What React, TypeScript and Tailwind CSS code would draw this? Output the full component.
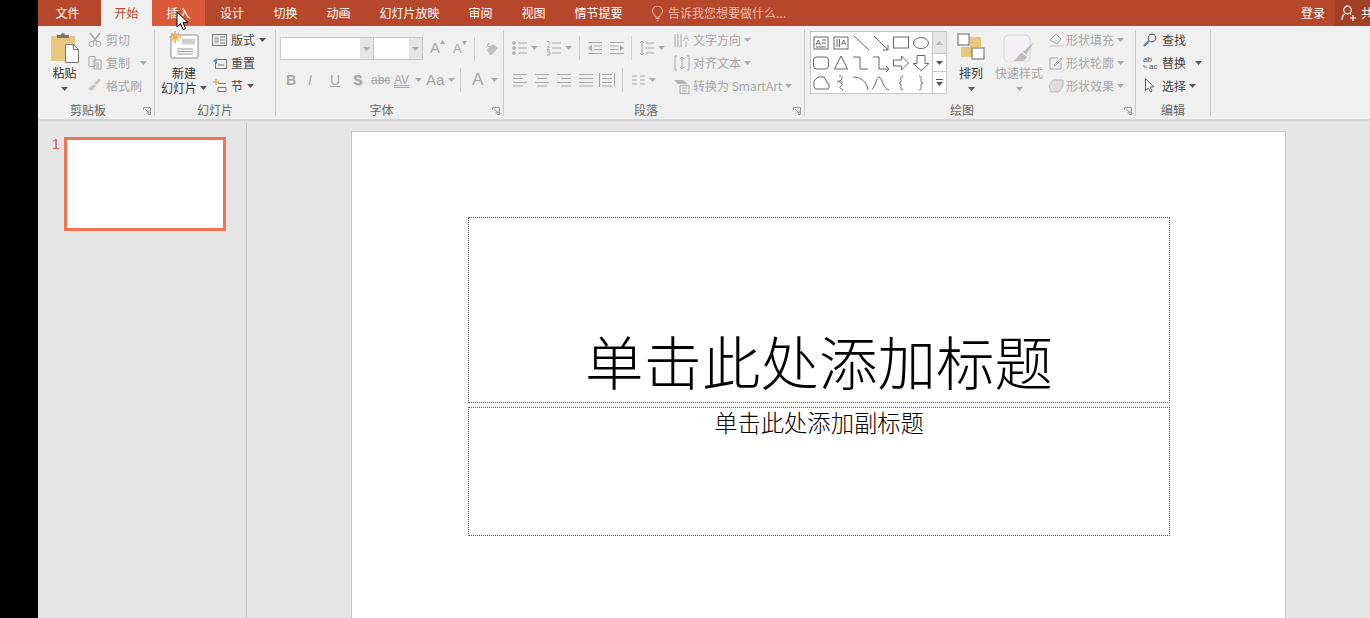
import type { ReactNode } from "react";

const FONT = { fontFamily: '"Noto Sans CJK SC", "Noto Sans", sans-serif' };

const tabs = [
  { label: "设计", w: "w-[54px]" },
  { label: "切换", w: "w-[53px]" },
  { label: "动画", w: "w-[53px]" },
  { label: "幻灯片放映", w: "w-[89px]" },
  { label: "审阅", w: "w-[53px]" },
  { label: "视图", w: "w-[53px]" },
  { label: "情节提要", w: "w-[77px]" },
];

function Caret({ dark = false }: { dark?: boolean }) {
  return (
    <svg width="7" height="4" viewBox="0 0 7 4" className="shrink-0">
      <path d="M0 0h7L3.5 4z" fill={dark ? "#555" : "#aaa"} />
    </svg>
  );
}

function Icon({ w = 16, h = 16, vb, children, className }: { w?: number; h?: number; vb?: string; children: ReactNode; className?: string }) {
  return (
    <svg width={w} height={h} viewBox={vb ?? `0 0 ${w} ${h}`} fill="none" stroke="#a8a8a8" strokeWidth="1" className={`shrink-0 ${className ?? ""}`}>
      {children}
    </svg>
  );
}

function Launcher() {
  return (
    <svg width="8" height="8" viewBox="0 0 8 8" fill="none" stroke="#9a9a9a" strokeWidth="1">
      <path d="M.5 3V.5H7.5V7.5H5" />
      <path d="M2 2l4 4M6 3.5V6H3.5" />
    </svg>
  );
}

function Group({ w, label, launcher, children }: { w: string; label: string; launcher?: boolean; children: ReactNode }) {
  return (
    <div className={`${w} flex h-[86px] shrink-0 flex-col border-r border-[#c9c9c9]`}>
      <div className="-mt-[2px] h-[72px] shrink-0">{children}</div>
      <div className="grid h-[20px] shrink-0 grid-cols-[1fr_auto_1fr] items-center text-[12px] leading-none text-[#666]">
        <span />
        <span className={launcher ? "mr-[16px]" : ""}>{label}</span>
        <span className="justify-self-end pr-[3px] pt-[1px]">{launcher && <Launcher />}</span>
      </div>
    </div>
  );
}

function SmallRow({ icon, label, caret, dark, gap = "gap-[4px]", caretGap = "ml-0" }: { icon: ReactNode; label: string; caret?: boolean; dark?: boolean; gap?: string; caretGap?: string }) {
  return (
    <div className={`flex h-[23px] items-center ${gap} text-[12px] leading-none ${dark ? "text-[#444]" : "text-[#a6a6a6]"}`}>
      {icon}
      <span className="whitespace-nowrap">{label}</span>
      {caret && <span className={`flex ${caretGap}`}><Caret dark={dark} /></span>}
    </div>
  );
}

function Lines({ kind }: { kind: "left" | "center" | "right" | "justify" | "distribute" }) {
  const rows = {
    left: ["M1 2.5h14", "M1 6.5h10", "M1 10.5h14", "M1 14h10"],
    center: ["M1 2.5h14", "M3 6.5h10", "M1 10.5h14", "M3 14h10"],
    right: ["M1 2.5h14", "M5 6.5h10", "M1 10.5h14", "M5 14h10"],
    justify: ["M1 2.5h14", "M1 6.5h14", "M1 10.5h14", "M1 14h14"],
    distribute: ["M.5 1v14", "M15.5 1v14", "M3 2.5h10", "M3 6.5h10", "M3 10.5h10", "M3 14h10"],
  }[kind];
  return <Icon>{rows.map((d) => <path key={d} d={d} />)}</Icon>;
}

const Sep = ({ h = "h-[24px]", ml }: { h?: string; ml: string }) => <span className={`${ml} ${h} w-px shrink-0 bg-[#cfcfcf]`} />;

function PasteIcon() {
  return (
    <svg width="30" height="31" viewBox="0 0 30 31" className="shrink-0">
      <rect x="1" y="4" width="24" height="25" rx="1" fill="#eac77f" />
      <path d="M7 6V3h4a2 2 0 0 1 4 0h4v3z" fill="#777" />
      <path d="M15.5 12.500h8l5 5v13h-13z" fill="#fff" stroke="#777" />
      <path d="M23.500 12.500v5h5" fill="none" stroke="#777" />
    </svg>
  );
}

function NewSlideIcon() {
  return (
    <svg width="32" height="29" viewBox="0 0 32 29" className="shrink-0">
      <rect x="3" y="5" width="27" height="23" rx="1" fill="#fff" stroke="#8a8a8a" />
      <rect x="14" y="8.500" width="13" height="6" fill="#cfcfcf" />
      <path d="M9 19h16M9 21.500h16M9 24h16" stroke="#9a9a9a" />
      <path d="M7 1v12M1 7h12M3 3l8 8M11 3l-8 8" stroke="#eab05a" strokeWidth="1.600" />
    </svg>
  );
}

const S = { stroke: "#666", fill: "none", strokeWidth: 1 };

const shapes: ReactNode[] = [
  <g key="a"><rect x="3" y="4" width="14" height="12" {...S} /><text x="4.500" y="12" fontSize="8" fill="#555" fontFamily="Liberation Sans">A</text><path d="M11 7h4M11 10h4M5 14h10" {...S} /></g>,
  <g key="b"><rect x="3" y="4" width="14" height="12" {...S} /><path d="M6 6v8M8.500 6v8" {...S} /><text x="10" y="12" fontSize="8" fill="#555" fontFamily="Liberation Sans">A</text></g>,
  <path key="c" d="M3 3l15 14" {...S} />,
  <path key="d" d="M3 3l14 14M17 12v5h-5" {...S} />,
  <rect key="e" x="2.500" y="4" width="15" height="11" {...S} />,
  <ellipse key="f" cx="10" cy="10" rx="7.500" ry="5.500" {...S} />,
  <rect key="g" x="2.500" y="4" width="15" height="12" rx="3" {...S} />,
  <path key="h" d="M10 3l6.500 13h-13z" {...S} />,
  <path key="i" d="M2 4h7v12h8" {...S} />,
  <path key="j" d="M2 4h6v12h10M15 13l3 3-3 3" {...S} />,
  <path key="k" d="M2.500 7h8V3l7 7-7 7v-4h-8z" {...S} />,
  <path key="l" d="M6 2.500h8v8h4l-8 7-8-7h4z" {...S} />,
  <path key="m" d="M3 8l4-4h6l3 5v1l2 1v4l-1 1H5l-2-2z" {...S} />,
  <path key="n" d="M8 3c4-1 4 3 1 5s5 2 1 5 4 3 1 5M6 9c3-2 6-1 5 1" {...S} />,
  <path key="o" d="M2 4c8 0 14 5 15 13" {...S} />,
  <path key="p" d="M1 16c4-2 4-12 7-12s4 12 10 13" {...S} />,
  <path key="q" d="M12 3c-3 0-2 3-2 5s-2 2-2 2 2 0 2 2-1 5 2 5" {...S} />,
  <path key="r" d="M8 3c3 0 2 3 2 5s2 2 2 2-2 0-2 2 1 5-2 5" {...S} />,
];

function Body() {
  return (
    <div className="flex min-h-0 flex-1 bg-[#e6e6e6]">
      <div className="mt-[2px] flex h-[495px] w-[209px] shrink-0 gap-[4px] border-r border-[#c6c6c6] pl-[14px] pt-[14px]">
        <span className="-mt-[1px] text-[14px] leading-[16px] text-[#c9593b]" style={{ fontFamily: '"Liberation Sans", sans-serif' }}>1</span>
        <div className="h-[94px] w-[162px] border-[3px] border-[#f37252] bg-white" />
      </div>
      <div className="ml-[104px] mt-[10px] flex h-[600px] w-[935px] shrink-0 flex-col border border-[#c6c6c6] bg-white pt-[85px]">
        <div className="ml-[116px] flex h-[186px] w-[702px] items-end justify-center border border-dotted border-[#555] pb-[3px] text-[58.5px] font-light leading-[78px] text-black">
          单击此处添加标题
        </div>
        <div className="ml-[116px] mt-[4px] flex h-[129px] w-[702px] justify-center border border-dotted border-[#555] text-[23.3px] font-light leading-[29px] text-black">
          单击此处添加副标题
        </div>
      </div>
    </div>
  );
}

export default function App() {
  return (
    <div className="relative flex h-[618px] w-[1370px] overflow-hidden bg-black" style={FONT}>
      <div className="ml-[38px] flex min-w-0 flex-1 flex-col">
        {/* title bar */}
        <div className="flex h-[26px] shrink-0 items-center bg-[#b7472a] text-[12px] leading-none text-white">
          <div className="flex h-full w-[63px] items-center justify-center pr-[4px]">文件</div>
          <div className="flex h-full w-[51px] items-center justify-center bg-[#f0f0f0] text-[#b7472a]">开始</div>
          <div className="flex h-full w-[53px] items-center justify-center bg-[#da5a3a]">插入</div>
          {tabs.map((t) => (
            <div key={t.label} className={`flex h-full ${t.w} items-center justify-center`}>{t.label}</div>
          ))}
          <div className="ml-[14px] flex items-center gap-[4px] text-[#f0bba8]">
            <svg width="13" height="15" viewBox="0 0 13 15" fill="none" stroke="#f0bba8" strokeWidth="1">
              <path d="M4.500 11C4 8.500 1.500 8 1.500 5a5 5 0 0 1 10 0c0 3-2.500 3.500-3 6zM4.500 12.500h4M5.500 14.500h2" />
            </svg>
            <span>告诉我您想要做什么...</span>
          </div>
          <div className="flex-1" />
          <span className="mr-[10px]">登录</span>
          <div className="flex h-full w-[35px] items-center overflow-hidden bg-[#a33f25] pl-[6px]">
            <svg width="15" height="16" viewBox="0 0 15 16" fill="none" stroke="#fff" strokeWidth="1.200" className="shrink-0">
              <circle cx="6.500" cy="5" r="3.800" />
              <path d="M1 15c0-4 2-6 4-6.500M9 8.500l1 1M9 13h6M12 10v6" />
            </svg>
            <span className="ml-[5px] shrink-0 text-[12px]">共享</span>
          </div>
        </div>

        {/* ribbon */}
        <div className="flex h-[95px] shrink-0 items-start border-b-2 border-[#d5d5d5] bg-[#f0f0f0] pt-[4px]">
          <Group w="w-[117px]" label="剪贴板" launcher>
            <div className="flex">
              <div className="flex w-[50px] flex-col items-center pl-[3px] pt-[4px] text-[12px] leading-none text-[#333]">
                <PasteIcon />
                <span className="mt-[4px]">粘贴</span>
                <span className="mt-[8px]"><Caret dark /></span>
              </div>
              <div className="flex flex-col">
                <SmallRow label="剪切" icon={<Icon w={14} h={15}><circle cx="3.500" cy="12" r="2.500" /><circle cx="10.500" cy="12" r="2.500" /><path d="M2 1l7 9M12 1L5 10" strokeWidth="1.500" /></Icon>} />
                <SmallRow label="复制" caret caretGap="ml-[6px]" icon={<Icon w={14} h={15}><path d="M1 1.500h6v10H1zM6 5h7v9H6zM8 8h3M8 10h3M8 12h3" /></Icon>} />
                <SmallRow label="格式刷" icon={<Icon w={14} h={15}><path d="M13 2L8 7 6 5l5-4zM6 6l2 2-4 5-4-2z" fill="#c4c4c4" stroke="none" /></Icon>} />
              </div>
            </div>
          </Group>

          <Group w="w-[121px]" label="幻灯片">
            <div className="flex">
              <div className="flex w-[57px] shrink-0 flex-col items-center pl-[1px] pt-[2px] text-[12px] leading-[15px] text-[#333]">
                <NewSlideIcon />
                <span className="mt-[6px]">新建</span>
                <span className="flex items-center gap-[3px] whitespace-nowrap">幻灯片<Caret dark /></span>
              </div>
              <div className="flex flex-col">
                <SmallRow dark label="版式" caret icon={<svg width="15" height="14" viewBox="0 0 15 14" fill="none" stroke="#777"><rect x=".5" y="1.500" width="14" height="11" /><rect x="2.500" y="3.500" width="4" height="7" fill="#bbb" stroke="none" /><path d="M8 4h5M8 7h5M8 10h5" /></svg>} />
                <SmallRow dark label="重置" icon={<svg width="15" height="14" viewBox="0 0 15 14" fill="none" stroke="#777"><rect x="3.500" y="3.500" width="11" height="9" /><path d="M6 9h6" /><path d="M1 5l4-3v6z" fill="#5d8fc0" stroke="none" /></svg>} />
                <SmallRow dark label="节" caret icon={<svg width="15" height="15" viewBox="0 0 15 15" fill="none" stroke="#c9593b"><path d="M4 1v6M1 4h6" stroke="#eab05a" strokeWidth="1.400" /><path d="M6 5.500h8" /><path d="M6 9.500h8v4H6z" stroke="#777" /></svg>} />
              </div>
            </div>
          </Group>

          <Group w="w-[228px]" label="字体" launcher>
            <div className="pl-[4px] pt-[9px]">
              <div className="flex h-[23px] items-center">
                <div className="flex h-[23px] w-[94px] items-stretch border border-[#c6c6c6] bg-white">
                  <div className="flex-1" />
                  <div className="flex w-[13px] items-center justify-center bg-[#e6e6e6]"><Caret /></div>
                </div>
                <div className="flex h-[23px] w-[49px] items-stretch border border-l-0 border-[#c6c6c6] bg-white">
                  <div className="flex-1" />
                  <div className="flex w-[13px] items-center justify-center bg-[#e6e6e6]"><Caret /></div>
                </div>
                <span className="ml-[7px] flex items-start text-[15px] text-[#a6a6a6]" style={{ fontFamily: '"Liberation Sans", sans-serif' }}>A<svg width="5" height="4" className="mt-[3px]"><path d="M0 4h5L2.500 0z" fill="#aaa" /></svg></span>
                <span className="ml-[8px] flex items-start text-[13px] text-[#a6a6a6]" style={{ fontFamily: '"Liberation Sans", sans-serif' }}>A<svg width="5" height="4" className="mt-[2px]"><path d="M0 0h5L2.500 4z" fill="#aaa" /></svg></span>
                <Sep ml="ml-[7px]" />
                <svg width="16" height="16" viewBox="0 0 16 16" className="ml-[9px] shrink-0"><path d="M3 9l6-6 5 4-6 7H6z" fill="#c0c0c0" /><text x="2" y="7" fontSize="7" fill="#aaa" fontFamily="Liberation Sans">A</text></svg>
              </div>
              <div className="mt-[8px] flex h-[24px] items-center text-[#a6a6a6]" style={{ fontFamily: '"Liberation Sans", sans-serif' }}>
                <span className="ml-[6px] w-[22px] text-[14px] font-bold">B</span>
                <span className="w-[22px] text-[14px] italic">I</span>
                <span className="w-[23px] text-[14px] underline">U</span>
                <span className="w-[18px] text-[14px] font-bold [text-shadow:1px_1px_1px_#ccc]">S</span>
                <span className="w-[23px] text-[12px] line-through">abc</span>
                <span className="w-[21px] text-[12px] underline decoration-double">AV</span>
                <Caret />
                <span className="ml-[4px] w-[22px] text-[15px]">Aa</span>
                <Caret />
                <Sep ml="ml-[5px]" />
                <span className="ml-[11px] w-[19px] text-[17px]">A</span>
                <Caret />
              </div>
            </div>
          </Group>

          <Group w="w-[301px]" label="段落" launcher>
            <div className="flex">
              <div className="w-[170px] shrink-0 pl-[8px] pt-[8px]">
                <div className="flex h-[23px] items-center">
                  <Icon><circle cx="2" cy="3" r="1.300" fill="#a8a8a8" /><circle cx="2" cy="8" r="1.300" fill="#a8a8a8" /><circle cx="2" cy="13" r="1.300" fill="#a8a8a8" /><path d="M6 3h9M6 8h9M6 13h9" /></Icon>
                  <span className="ml-[3px] flex"><Caret /></span>
                  <Icon className="ml-[8px]"><path d="M1 1.500h2v3M1 7h2.500L1 10h3M1 12h3v3H1M6 3h9M6 8h9M6 13h9" /></Icon>
                  <span className="ml-[3px] flex"><Caret /></span>
                  <Sep ml="ml-[7px]" />
                  <Icon className="ml-[7px]"><path d="M1 2.500h14M7 6h8M7 9.500h8M1 13.500h14" /><path d="M5 5v6L1 8z" fill="#a8a8a8" stroke="none" /></Icon>
                  <Icon className="ml-[6px]"><path d="M1 2.500h14M1 6h8M1 9.500h8M1 13.500h14" /><path d="M11 5v6l4-3z" fill="#a8a8a8" stroke="none" /></Icon>
                  <Sep ml="ml-[6px]" />
                  <Icon className="ml-[7px]"><path d="M3 1v14M1 3l2-2 2 2M1 13l2 2 2-2M7 3h8M7 8h8M7 13h8" /></Icon>
                  <span className="ml-[3px] flex"><Caret /></span>
                </div>
                <div className="mt-[9px] flex h-[24px] items-center">
                  <Lines kind="left" />
                  <span className="ml-[6px] flex"><Lines kind="center" /></span>
                  <span className="ml-[6px] flex"><Lines kind="right" /></span>
                  <span className="ml-[6px] flex"><Lines kind="justify" /></span>
                  <span className="ml-[5px] flex"><Lines kind="distribute" /></span>
                  <Sep ml="ml-[7px]" />
                  <Icon w={15} className="ml-[8px]"><path d="M1 4h5M9 4h5M1 8h5M9 8h5M1 12h5M9 12h5" /></Icon>
                  <span className="ml-[3px] flex"><Caret /></span>
                </div>
              </div>
              <div className="flex flex-col">
                <SmallRow label="文字方向" caret icon={<Icon><path d="M1 2v13M4 2v13M7 2v13" /><text x="9" y="9" fontSize="9" fill="#a8a8a8" stroke="none" fontFamily="Liberation Sans">A</text><path d="M12 10v5" /></Icon>} gap="gap-[3px]" />
                <SmallRow label="对齐文本" caret icon={<Icon><path d="M3 1H1v14h2M13 1h2v14h-2M8 2v12M6 4l2-2 2 2M6 12l2 2 2-2" /></Icon>} gap="gap-[3px]" />
                <SmallRow label="转换为 SmartArt" caret icon={<Icon><path d="M0 2h9l5 4H4z" fill="#b4b4b4" stroke="none" /><path d="M6 7.500h9v8H6zM8 10h5M8 13h5" /></Icon>} gap="gap-[3px]" />
              </div>
            </div>
          </Group>

          <Group w="w-[331px]" label="绘图" launcher>
            <div className="flex">
              <div className="ml-[5px] mt-[3px] flex h-[63px] w-[137px] shrink-0 justify-between border border-[#c6c6c6] bg-white">
                <div className="grid w-[120px] grid-cols-6 pt-[1px]">
                  {shapes.map((s, i) => (
                    <svg key={i} width="20" height="20" viewBox="0 0 20 20">{s}</svg>
                  ))}
                </div>
                <div className="flex w-[14px] flex-col border-l border-[#c6c6c6]">
                  <div className="flex h-[21px] items-center justify-center bg-[#e6e6e6]">
                    <svg width="7" height="4"><path d="M0 4h7L3.500 0z" fill="#b5b5b5" /></svg>
                  </div>
                  <div className="flex h-[19px] items-center justify-center border-y border-[#c6c6c6]"><Caret dark /></div>
                  <div className="flex flex-1 items-center justify-center">
                    <svg width="7" height="7"><path d="M0 .5h7" stroke="#555" /><path d="M0 3h7L3.500 7z" fill="#555" /></svg>
                  </div>
                </div>
              </div>
              <div className="ml-[4px] flex w-[40px] shrink-0 flex-col items-center pt-[5px] text-[12px] leading-none text-[#333]">
                <svg width="28" height="28" viewBox="0 0 28 28" className="shrink-0">
                  <rect x="13" y="4" width="11" height="10" fill="#eac77f" />
                  <rect x="4" y="14" width="11" height="10" fill="#eac77f" />
                  <rect x="1" y="1" width="11" height="11" fill="#fff" stroke="#666" />
                  <rect x="15" y="15" width="12" height="11" fill="#fff" stroke="#666" />
                </svg>
                <span className="mt-[6px]">排列</span>
                <span className="mt-[8px]"><Caret dark /></span>
              </div>
              <div className="ml-[3px] flex w-[50px] shrink-0 flex-col items-center pt-[6px] text-[12px] leading-none text-[#a6a6a6]">
                <svg width="32" height="28" viewBox="0 0 32 28" className="shrink-0">
                  <rect x="1" y="1" width="26" height="27" rx="5" fill="#f3f1f5" stroke="#d4d4d4" />
                  <path d="M31 8L20 18l3 3zM19 19c-3 0-3 5-9 8h11l3-4z" fill="#bdbdbd" />
                </svg>
                <span className="mt-[5px] whitespace-nowrap">快速样式</span>
                <span className="mt-[8px]"><Caret /></span>
              </div>
              <div className="ml-[4px] flex flex-col">
                <SmallRow label="形状填充" caret icon={<Icon><path d="M2 8l6-6 5 5-4 5z" fill="#eee" /><path d="M1 14h14" strokeWidth="2" stroke="#dcdcdc" /></Icon>} gap="gap-[2px]" caretGap="ml-[1px]" />
                <SmallRow label="形状轮廓" caret icon={<Icon><path d="M2 3h8M2 3v11h11V8" /><path d="M6 10l7-7 1 1-7 7z" /></Icon>} gap="gap-[2px]" caretGap="ml-[1px]" />
                <SmallRow label="形状效果" caret icon={<Icon><path d="M1 8l4-6h10v6l-4 6H3z" fill="#ddd" stroke="#bbb" /></Icon>} gap="gap-[2px]" caretGap="ml-[1px]" />
              </div>
            </div>
          </Group>

          <Group w="w-[75px]" label="编辑">
            <div className="flex flex-col pl-[7px]">
              <SmallRow dark label="查找" gap="gap-[5px]" icon={<svg width="14" height="14" viewBox="0 0 14 14" fill="none" stroke="#666" className="shrink-0"><circle cx="9" cy="5" r="3.800" strokeWidth="1.200" /><path d="M6 8l-5 5" stroke="#5c7fa3" strokeWidth="2" /></svg>} />
              <SmallRow dark label="替换" caret caretGap="ml-[6px]" gap="gap-[3px]" icon={<svg width="16" height="15" viewBox="0 0 16 15" className="shrink-0"><text x="0" y="7" fontSize="8" fill="#555" fontFamily="Liberation Sans">ab</text><text x="6" y="14" fontSize="8" fill="#555" fontFamily="Liberation Sans">ac</text><path d="M1 10v2h3" stroke="#5c7fa3" fill="none" /></svg>} />
              <SmallRow dark label="选择" caret caretGap="-ml-[2px]" gap="gap-[5px]" icon={<svg width="14" height="15" viewBox="0 0 14 15" fill="#fff" stroke="#666" className="shrink-0"><path d="M2.500 .5v12l3-2.500 2 4 1.500-1-2-4h4z" /></svg>} />
            </div>
          </Group>
        </div>

        <Body />
      </div>

      {/* mouse cursor */}
      <svg width="14" height="20" viewBox="0 0 14 20" className="absolute left-[176px] top-[11px]">
        <path d="M1 1v15l3.500-3.500 2.500 6 2.500-1-2.500-6h5z" fill="#fff" stroke="#000" />
      </svg>
    </div>
  );
}
